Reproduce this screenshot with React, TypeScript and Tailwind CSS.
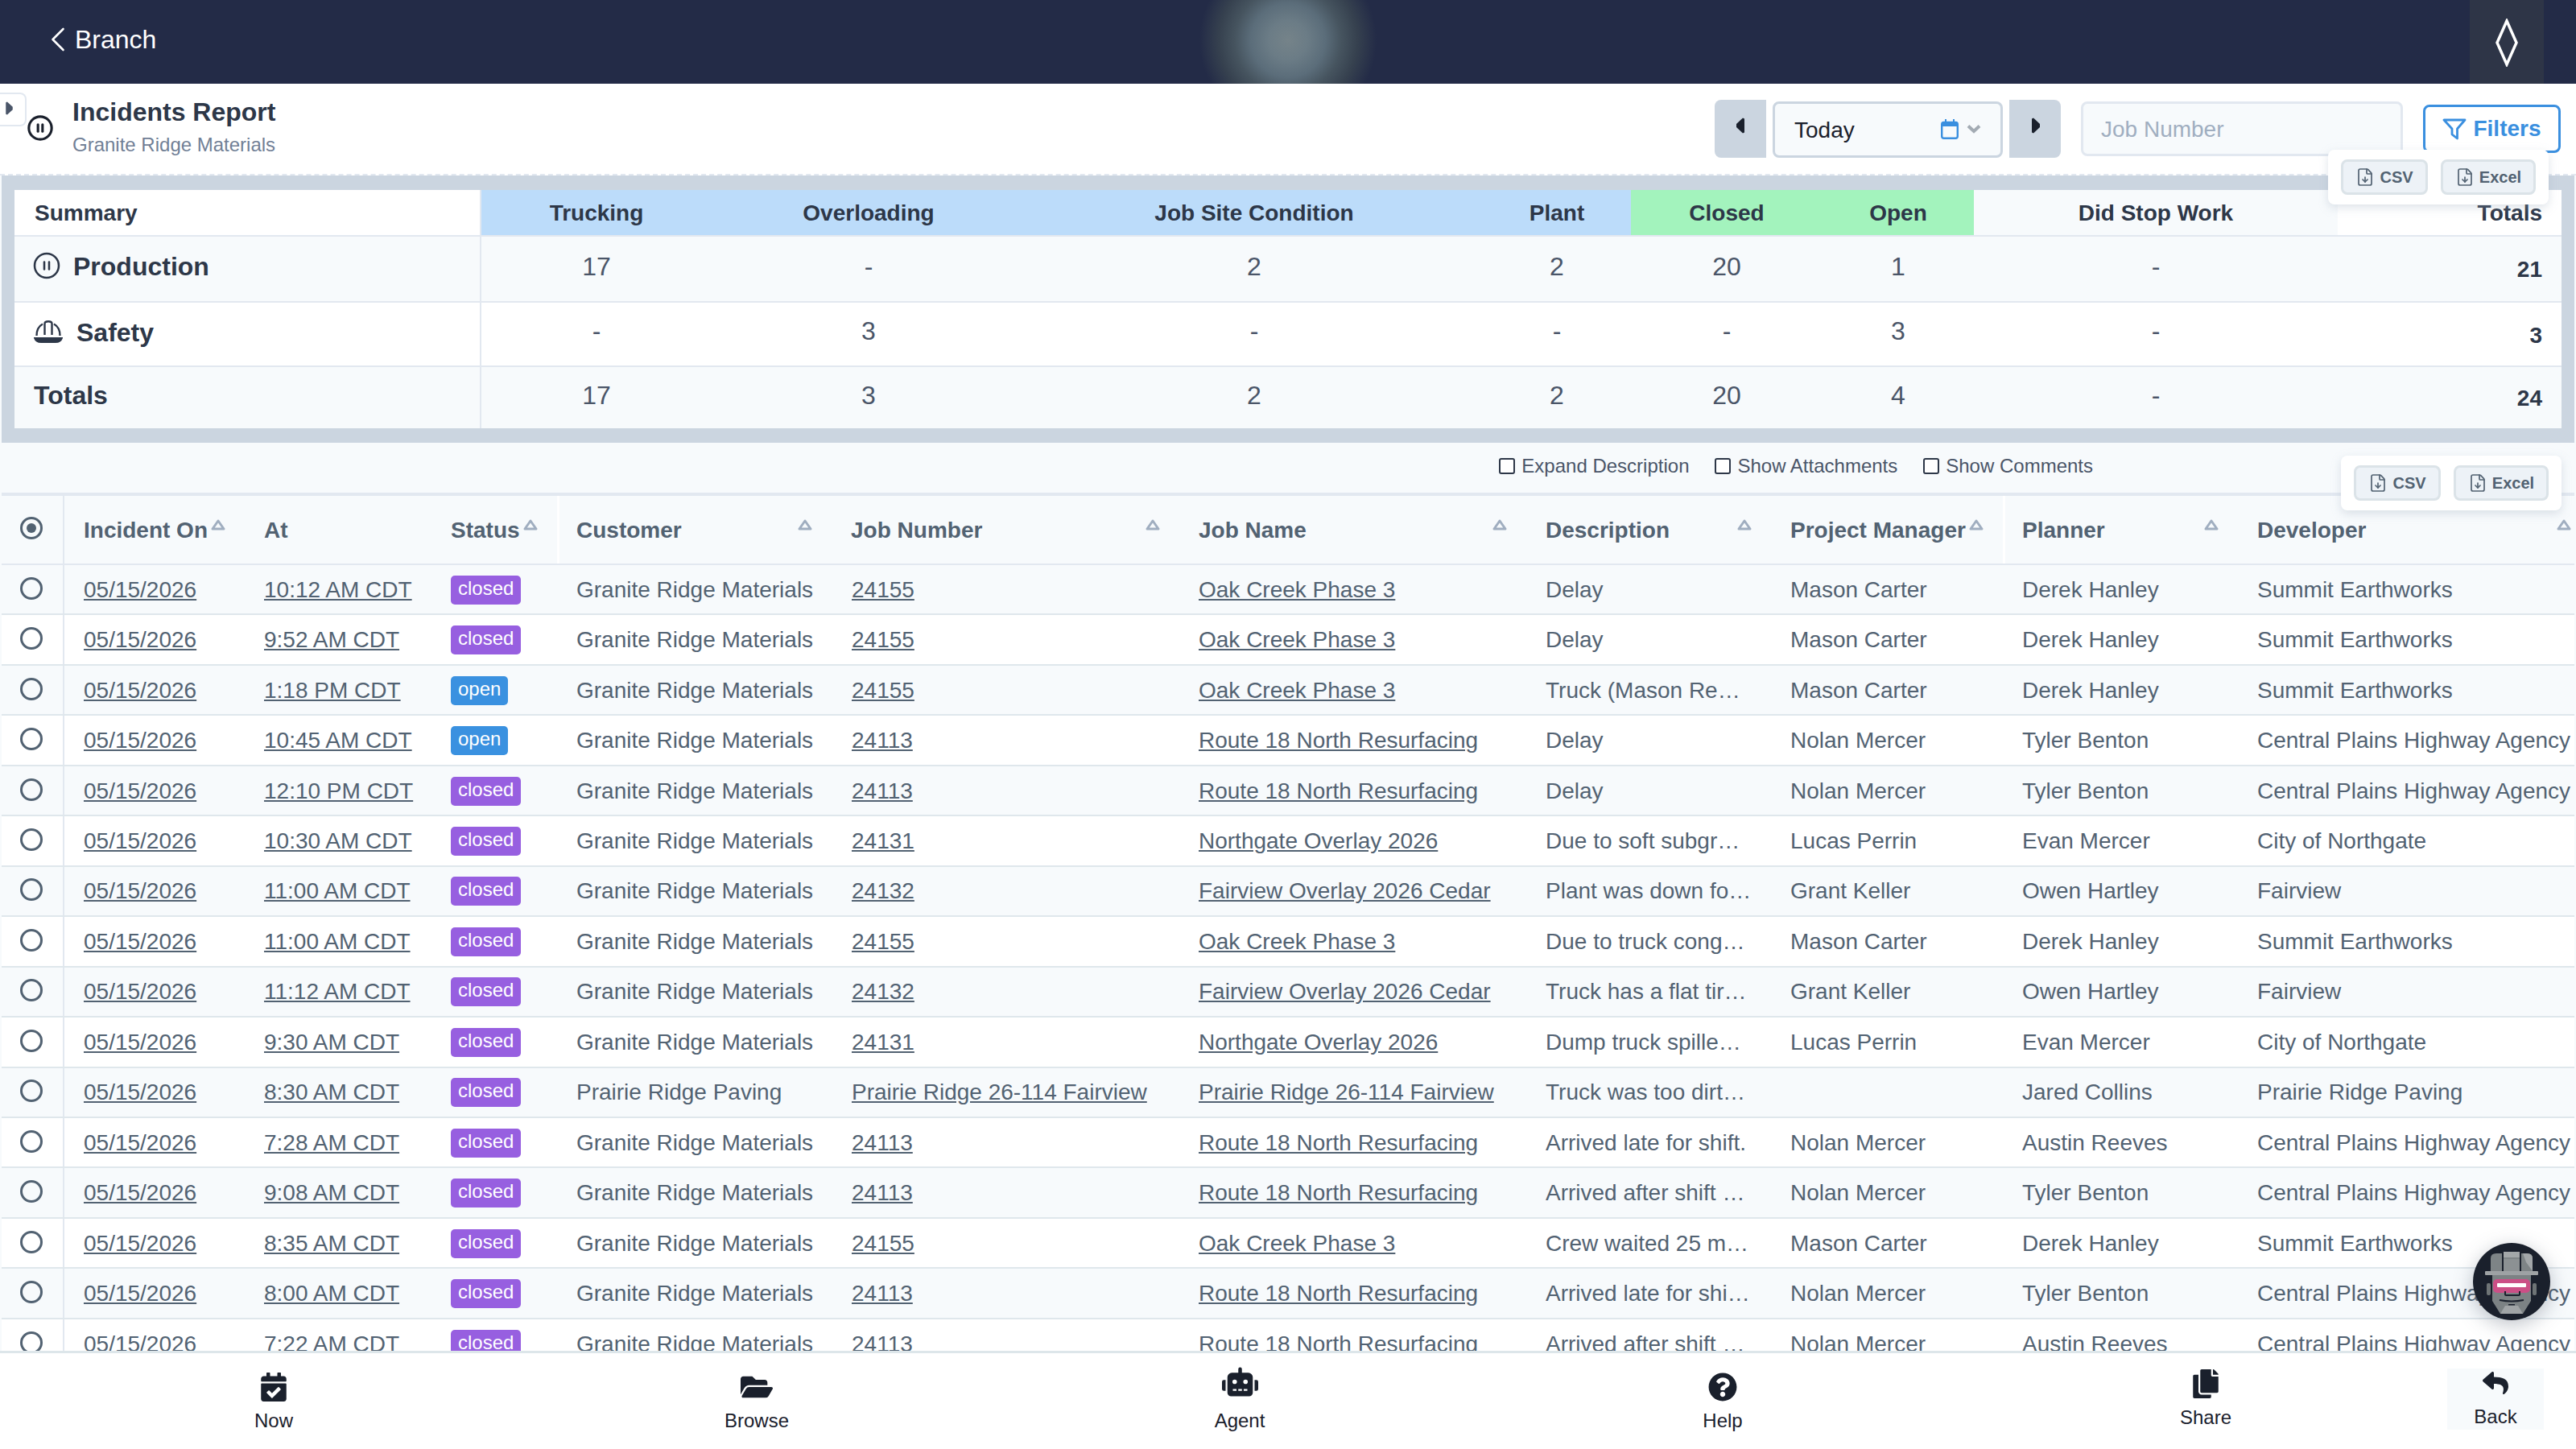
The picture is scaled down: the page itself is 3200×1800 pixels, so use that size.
import React from "react";
import { ChevronLeft, CirclePause, FileDown } from "lucide-react";
import {
  FaCalendarCheck,
  FaFolderOpen,
  FaRobot,
  FaQuestionCircle,
  FaCopy,
  FaReply,
} from "react-icons/fa";

type Row = [string, string, string, string, string, string, string, string, string];

const G = "Granite Ridge Materials";
const OAK = "Oak Creek Phase 3";
const R18 = "Route 18 North Resurfacing";
const NOR = "Northgate Overlay 2026";
const FV = "Fairview Overlay 2026 Cedar";
const PR = "Prairie Ridge 26-114 Fairview";
const SE = "Summit Earthworks";
const CP = "Central Plains Highway Agency";

const rows: Row[] = [
  ["10:12 AM CDT", "closed", G, "24155", OAK, "Delay", "Mason Carter", "Derek Hanley", SE],
  ["9:52 AM CDT", "closed", G, "24155", OAK, "Delay", "Mason Carter", "Derek Hanley", SE],
  ["1:18 PM CDT", "open", G, "24155", OAK, "Truck (Mason Rentals) arrived late", "Mason Carter", "Derek Hanley", SE],
  ["10:45 AM CDT", "open", G, "24113", R18, "Delay", "Nolan Mercer", "Tyler Benton", CP],
  ["12:10 PM CDT", "closed", G, "24113", R18, "Delay", "Nolan Mercer", "Tyler Benton", CP],
  ["10:30 AM CDT", "closed", G, "24131", NOR, "Due to soft subgrade conditions", "Lucas Perrin", "Evan Mercer", "City of Northgate"],
  ["11:00 AM CDT", "closed", G, "24132", FV, "Plant was down for repairs", "Grant Keller", "Owen Hartley", "Fairview"],
  ["11:00 AM CDT", "closed", G, "24155", OAK, "Due to truck congestion at plant", "Mason Carter", "Derek Hanley", SE],
  ["11:12 AM CDT", "closed", G, "24132", FV, "Truck has a flat tire on site", "Grant Keller", "Owen Hartley", "Fairview"],
  ["9:30 AM CDT", "closed", G, "24131", NOR, "Dump truck spilled material", "Lucas Perrin", "Evan Mercer", "City of Northgate"],
  ["8:30 AM CDT", "closed", "Prairie Ridge Paving", PR, PR, "Truck was too dirty to load", "", "Jared Collins", "Prairie Ridge Paving"],
  ["7:28 AM CDT", "closed", G, "24113", R18, "Arrived late for shift.", "Nolan Mercer", "Austin Reeves", CP],
  ["9:08 AM CDT", "closed", G, "24113", R18, "Arrived after shift started", "Nolan Mercer", "Tyler Benton", CP],
  ["8:35 AM CDT", "closed", G, "24155", OAK, "Crew waited 25 minutes for trucks", "Mason Carter", "Derek Hanley", SE],
  ["8:00 AM CDT", "closed", G, "24113", R18, "Arrived late for shift due to traffic", "Nolan Mercer", "Tyler Benton", CP],
  ["7:22 AM CDT", "closed", G, "24113", R18, "Arrived after shift started", "Nolan Mercer", "Austin Reeves", CP],
];

const COLS = "grid grid-cols-[78px_224px_232px_156px_341px_432px_431px_304px_288px_292px_1fr]";
const SUM = "grid grid-cols-[580px_286px_390px_568px_184px_238px_188px_452px_1fr]";

function SortUp() {
  return (
    <svg width="18" height="14" viewBox="0 0 18 14" className="shrink-0 mb-[14px]">
      <path d="M9 2 L16 12 H2 Z" fill="none" stroke="#a0aec0" strokeWidth="3" strokeLinejoin="round" />
    </svg>
  );
}

function Caret({ dir, w = 12, h = 20, color = "#1a202c" }: { dir: "l" | "r"; w?: number; h?: number; color?: string }) {
  const d = dir === "r" ? "M1 1.5 L3 0.5 L11 8 V12 L3 19.5 L1 18.5 Z" : "M11 1.5 L9 0.5 L1 8 V12 L9 19.5 L11 18.5 Z";
  return (
    <svg width={w} height={h} viewBox="0 0 12 20" className="shrink-0">
      <path d={d} fill={color} />
    </svg>
  );
}

function HardHat() {
  return (
    <svg width="36" height="28" viewBox="0 0 36 28" fill="none" className="shrink-0">
      <path d="M3.5 19 C3.5 12 6.5 7 11 4.5" stroke="#2d3748" strokeWidth="2.4" />
      <path d="M32.5 19 C32.5 12 29.5 7 25 4.5" stroke="#2d3748" strokeWidth="2.4" />
      <path d="M13.5 18 V4 Q13.5 1.2 18 1.2 Q22.5 1.2 22.5 4 V18" stroke="#2d3748" strokeWidth="2.4" />
      <path d="M0 21 H36 V22 Q34 28 27 28 H9 Q2 28 0 22 Z" fill="#2d3748" />
    </svg>
  );
}

function CalendarIcon() {
  return (
    <svg width="22" height="25" viewBox="0 0 22 25" className="shrink-0">
      <rect x="5" y="0" width="2" height="5" fill="#3a8fdf" />
      <rect x="15" y="0" width="2" height="5" fill="#3a8fdf" />
      <rect x="1.2" y="4" width="19.6" height="19.8" rx="2.5" fill="#f7fafc" stroke="#3a8fdf" strokeWidth="2.4" />
      <path d="M1 6 Q1 3 4 3 H18 Q21 3 21 6 V9 H1 Z" fill="#3a8fdf" />
    </svg>
  );
}

function ChevronThick() {
  return (
    <svg width="18" height="12" viewBox="0 0 18 12" className="shrink-0">
      <path d="M2 2.5 L9 9 L16 2.5" fill="none" stroke="#a3abb3" strokeWidth="4" />
    </svg>
  );
}

function FunnelIcon() {
  return (
    <svg width="30" height="27" viewBox="0 0 30 27" fill="none" className="shrink-0">
      <path d="M2 2 H28 L18.5 13 V25 L12 20 V13 Z" stroke="#3a8fdf" strokeWidth="2.8" strokeLinejoin="round" />
    </svg>
  );
}

function Avatar() {
  return (
    <svg width="96" height="96" viewBox="0 0 96 96">
      <circle cx="48" cy="48" r="48" fill="#1a202c" />
      <path d="M22 35 V19 Q22 13 29 13 H67 Q74 13 74 19 V35 Z" fill="#7e8486" />
      <path d="M62 13 H67 Q74 13 74 19 V35 L66 24 Z" fill="#a3a7a9" />
      <rect x="38" y="11" width="20" height="7" fill="#a3a7a9" />
      <rect x="36" y="11" width="2" height="24" fill="#1a202c" />
      <rect x="58" y="11" width="2" height="24" fill="#1a202c" />
      <rect x="38" y="20" width="20" height="15" fill="#8c9193" />
      <rect x="15" y="35" width="66" height="5" rx="1" fill="#9ea2a4" />
      <rect x="17" y="50" width="5" height="15" rx="2" fill="#6e7476" />
      <rect x="74" y="50" width="5" height="15" rx="2" fill="#6e7476" />
      <path d="M24 40 H72 V72 L62 88 H34 L24 72 Z" fill="#7c8284" />
      <path d="M34 88 L40 78 H56 L62 88 Z" fill="#a0a4a6" />
      <rect x="25" y="45" width="46" height="17" rx="5" fill="#cb4f86" />
      <rect x="30" y="50" width="36" height="5" rx="1" fill="#ffffff" />
      <path d="M40 60 V64 Q40 65 42 65 H56 Q58 65 58 64 V60" fill="none" stroke="#1a202c" strokeWidth="2" />
      <path d="M33 71 Q48 74 63 71" fill="none" stroke="#1a202c" strokeWidth="2" />
      <rect x="44" y="76" width="8" height="1.5" fill="#1a202c" />
    </svg>
  );
}

function Popup({ className }: { className: string }) {
  return (
    <div className={"absolute flex gap-4 items-center bg-white rounded-lg px-4 h-[68px] shadow-[0_4px_12px_rgba(160,174,192,0.35)] " + className}>
      <div className="h-[44px] w-[108px] flex items-center justify-center gap-[6px] bg-[#edf2f7] border-[3px] border-[#dbe3e8] rounded-lg text-[20px] font-bold text-[#526272]">
        <FileDown size={24} strokeWidth={1.7} />
        CSV
      </div>
      <div className="h-[44px] w-[118px] flex items-center justify-center gap-[6px] bg-[#edf2f7] border-[3px] border-[#dbe3e8] rounded-lg text-[20px] font-bold text-[#526272]">
        <FileDown size={24} strokeWidth={1.7} />
        Excel
      </div>
    </div>
  );
}

function Check({ label }: { label: string }) {
  return (
    <div className="flex items-center gap-2 text-[24px] text-[#4a5568]">
      <span className="w-[20px] h-[20px] border-2 border-[#2d3748] rounded-[3px] bg-white" />
      {label}
    </div>
  );
}

function Head({ label, sort = true, cls = "" }: { label: string; sort?: boolean; cls?: string }) {
  return (
    <div className={"flex items-center justify-between pt-[2px] pr-6 " + (cls || "pl-6")}>
      <span>{label}</span>
      {sort && <SortUp />}
    </div>
  );
}

function Nav({ icon, label, up = false, cls = "" }: { icon: React.ReactNode; label: string; up?: boolean; cls?: string }) {
  return (
    <div className={"flex flex-col items-center text-[24px] text-[#1a202c] " + (up ? "pt-[20px]" : "pt-[24px]") + " " + cls}>
      <div className="h-[36px] flex items-center justify-center">{icon}</div>
      <div className="mt-[10px] leading-[28px]">{label}</div>
    </div>
  );
}

function SummaryRow({
  label,
  vals,
  total,
  bg,
  pt,
  numPt,
  totalPt,
  border,
}: {
  label: React.ReactNode;
  vals: string[];
  total: string;
  bg: string;
  pt: string;
  numPt: string;
  totalPt: string;
  border: string;
}) {
  return (
    <div className={SUM + " h-full " + bg + " " + border}>
      <div className={"flex items-start gap-[15px] pl-6 font-bold text-[32px] leading-10 text-[#2d3748] border-r-2 border-[#e2e8f0] " + pt}>{label}</div>
      {vals.map((v, i) => (
        <div key={i} className={"text-center text-[32px] leading-10 text-[#4a5568] " + numPt}>
          {v}
        </div>
      ))}
      <div className={"text-right pr-6 text-[28px] font-bold leading-10 text-[#2d3748] " + totalPt}>{total}</div>
    </div>
  );
}

export default function App() {
  return (
    <div className="w-[3200px] h-[1800px] overflow-hidden flex flex-col bg-white relative [font-family:'Liberation_Sans',Arial,sans-serif]">
      {/* Top bar */}
      <header className="h-[104px] shrink-0 relative overflow-hidden bg-[#232b47] flex items-center text-white">
        <div className="flex items-center pl-[46px] pb-[6px] text-[32px]">
          <ChevronLeft size={52} strokeWidth={1.2} className="-mr-[5px]" />
          Branch
        </div>
        <div className="absolute left-[1490px] top-[-60px] w-[220px] h-[220px] bg-[radial-gradient(circle_closest-side,#758389_0%,#6b7c86_22%,#5b6d7a_42%,#46545f_60%,#36414f_78%,#232b47_100%)]" />
        <div className="ml-auto mr-[40px] w-[92px] h-full bg-[#2e3547] flex items-center justify-center">
          <svg width="30" height="60" viewBox="0 0 30 60" fill="none" className="mt-[2px]">
            <path d="M15 3 L27 30 L15 57 L3 30 Z" stroke="#fff" strokeWidth="3.5" />
          </svg>
        </div>
      </header>

      {/* Title bar */}
      <div className="h-[114px] shrink-0 relative flex items-start border-b-2 border-dashed border-[#e2e8f0] pl-[33px] pr-[19px]">
        <div className="absolute left-0 top-[11px] w-[33px] h-[42px] bg-white border-2 border-l-0 border-[#e2e8f0] rounded-r-lg flex items-center pl-[6px] pb-[3px]">
          <Caret dir="r" w={11} h={17} color="#4a5568" />
        </div>
        <div className="mt-[38px] text-[#1a202c]">
          <CirclePause size={34} strokeWidth={2.2} />
        </div>
        <div className="ml-[23px] mt-[15px]">
          <div className="text-[32px] leading-10 font-bold text-[#2d3748]">Incidents Report</div>
          <div className="text-[24px] leading-8 mt-[5px] text-[#718096]">{G}</div>
        </div>
        <div className="ml-auto flex items-start mt-[20px]">
          <div className="w-[64px] h-[72px] bg-[#cbd5e0] rounded-l-lg flex items-center justify-center pb-[8px]">
            <Caret dir="l" />
          </div>
          <div className="ml-2 mt-[2px] w-[286px] h-[70px] bg-[#f7fafc] border-[3px] border-[#cbd5e0] rounded-lg flex items-center pl-6 pr-[24px] pt-[2px] text-[28px] text-[#1a202c]">
            Today
            <span className="ml-auto -mt-[4px]">
              <CalendarIcon />
            </span>
            <span className="ml-[10px] -mt-[4px]">
              <ChevronThick />
            </span>
          </div>
          <div className="ml-2 w-[64px] h-[72px] bg-[#cbd5e0] rounded-r-lg flex items-center justify-center pl-[2px] pb-[8px]">
            <Caret dir="r" />
          </div>
          <div className="ml-[25px] mt-[2px] w-[400px] h-[68px] bg-[#f7fafc] border-[3px] border-[#e2e8f0] rounded-lg flex items-center pl-[22px] pt-[2px] text-[28px] text-[#a0aec0]">
            Job Number
          </div>
          <div className="ml-[25px] mt-[6px] w-[171px] h-[60px] border-[3px] border-[#3a8fdf] rounded-lg flex items-center justify-center gap-[8px] text-[28px] font-bold text-[#3a8fdf]">
            <FunnelIcon />
            Filters
          </div>
        </div>
      </div>

      <Popup className="left-[2892px] top-[186px] z-10" />

      {/* Main */}
      <main className="flex-1 min-h-0 flex flex-col px-[2px] bg-[#f7fafc] overflow-hidden">
        <div className="shrink-0 bg-[#cbd5e0] px-4 py-[18px]">
          <div className="flex flex-col">
            <div className={SUM + " h-[58px] text-[28px] font-bold text-[#2d3748] border-b-2 border-[#e2e8f0]"}>
              <div className="bg-white pl-[25px] pt-[1px] flex items-center border-r-2 border-[#e2e8f0]">Summary</div>
              {["Trucking", "Overloading", "Job Site Condition", "Plant"].map((h) => (
                <div key={h} className="bg-[#bcdcfa] pt-[1px] flex items-center justify-center">
                  {h}
                </div>
              ))}
              {["Closed", "Open"].map((h) => (
                <div key={h} className="bg-[#a3f3bd] pt-[1px] flex items-center justify-center">
                  {h}
                </div>
              ))}
              <div className="bg-[#f7fafc] pt-[1px] flex items-center justify-center">Did Stop Work</div>
              <div className="bg-white pt-[1px] flex items-center justify-end pr-6">Totals</div>
            </div>
            <div className="h-[82px]">
              <SummaryRow
                label={
                  <>
                    <CirclePause size={36} strokeWidth={1.7} className="mt-[1px] -ml-[2px]" />
                    Production
                  </>
                }
                vals={["17", "-", "2", "2", "20", "1", "-"]}
                total="21"
                bg="bg-[#f7fafc]"
                pt="pt-[17px]"
                numPt="pt-[17px]"
                totalPt="pt-[21px]"
                border="border-b-2 border-[#e2e8f0]"
              />
            </div>
            <div className="h-[80px]">
              <SummaryRow
                label={
                  <>
                    <span className="mt-[5px] mr-[2px]">
                      <HardHat />
                    </span>
                    Safety
                  </>
                }
                vals={["-", "3", "-", "-", "-", "3", "-"]}
                total="3"
                bg="bg-white"
                pt="pt-[17px]"
                numPt="pt-[15px]"
                totalPt="pt-[21px]"
                border="border-b-2 border-[#e2e8f0]"
              />
            </div>
            <div className="h-[76px]">
              <SummaryRow
                label="Totals"
                vals={["17", "3", "2", "2", "20", "4", "-"]}
                total="24"
                bg="bg-[#f7fafc]"
                pt="pt-[15px]"
                numPt="pt-[15px]"
                totalPt="pt-[19px]"
                border=""
              />
            </div>
          </div>
        </div>

        <div className="h-[62px] shrink-0 flex items-center justify-end gap-[32px] pr-[598px] pb-[5px]">
          <Check label="Expand Description" />
          <Check label="Show Attachments" />
          <Check label="Show Comments" />
        </div>

        <div className="flex-1 min-h-0 overflow-hidden border-t-4 border-[#e2e8f0] bg-white">
          <div className={COLS + " h-[86px] bg-[#f7fafc] border-b-2 border-[#e2e8f0] text-[28px] font-bold text-[#526272]"}>
            <div className="flex items-center justify-center border-r-2 border-[#e2e8f0] pb-[4px] pr-[2px]">
              <span className="w-[28px] h-[28px] rounded-full border-[3px] border-[#526272] flex items-center justify-center">
                <span className="w-[12px] h-[12px] rounded-full bg-[#526272]" />
              </span>
            </div>
            <Head label="Incident On" />
            <Head label="At" sort={false} />
            <Head label="Status" />
            <Head label="Customer" cls="pl-[21px] border-l-[3px] border-white" />
            <Head label="Job Number" />
            <Head label="Job Name" />
            <Head label="Description" />
            <Head label="Project Manager" />
            <Head label="Planner" cls="pl-[21px] border-l-[3px] border-white" />
            <Head label="Developer" cls="pl-6 !pr-1" />
          </div>

          {rows.map((r, i) => (
            <div
              key={i}
              className={COLS + " h-[62.46px] pt-[1px] items-stretch border-b-2 border-[#dfe7ec] text-[28px] text-[#526272] " + (i % 2 === 0 ? "bg-[#f7fafc]" : "bg-white")}
            >
              <div className="flex items-center justify-center border-r-2 border-[#e2e8f0] pb-[3px] pr-[2px] -mt-[1px]">
                <span className="w-[28px] h-[28px] rounded-full border-[3px] border-[#526272]" />
              </div>
              <div className="pl-6 flex items-center">
                <span className="underline">05/15/2026</span>
              </div>
              <div className="pl-6 flex items-center">
                <span className="underline">{r[0]}</span>
              </div>
              <div className="pl-6 flex items-center">
                <span className={"h-[36px] px-[9px] rounded-[5px] text-[24px] leading-[32px] text-white " + (r[1] === "open" ? "bg-[#3a91e0]" : "bg-[#975fe0]")}>
                  {r[1]}
                </span>
              </div>
              <div className="pl-6 flex items-center whitespace-nowrap">{r[2]}</div>
              <div className="pl-[25px] flex items-center whitespace-nowrap">
                <span className="underline">{r[3]}</span>
              </div>
              <div className="pl-6 flex items-center whitespace-nowrap">
                <span className="underline">{r[4]}</span>
              </div>
              <div className="pl-6 pr-6 flex items-center min-w-0">
                <span className="truncate">{r[5]}</span>
              </div>
              <div className="pl-6 flex items-center whitespace-nowrap">{r[6]}</div>
              <div className="pl-6 flex items-center whitespace-nowrap">{r[7]}</div>
              <div className="pl-6 flex items-center whitespace-nowrap">{r[8]}</div>
            </div>
          ))}
        </div>
      </main>

      <Popup className="left-[2908px] top-[566px] z-10" />

      {/* Avatar */}
      <div className="absolute left-[3072px] top-[1544px] w-[96px] h-[96px] rounded-full shadow-[0_6px_24px_rgba(74,85,104,0.35)] z-10">
        <Avatar />
      </div>

      {/* Footer */}
      <footer className="h-[122px] shrink-0 bg-white border-t-[3px] border-[#dde6ea] px-10 grid grid-cols-[600px_600px_600px_600px_600px_120px]">
        <Nav icon={<FaCalendarCheck size={36} />} label="Now" />
        <Nav icon={<FaFolderOpen size={40} />} label="Browse" />
        <Nav icon={<FaRobot size={45} className="-mt-[14px]" />} label="Agent" />
        <Nav icon={<FaQuestionCircle size={36} />} label="Help" />
        <Nav icon={<FaCopy size={36} />} label="Share" up />
        <div className="pt-[21px]">
          <div className="h-[76px] bg-[#f7fafc]">
            <Nav icon={<FaReply size={32} />} label="Back" up cls="!pt-0 -mt-[2px]" />
          </div>
        </div>
      </footer>
    </div>
  );
}
